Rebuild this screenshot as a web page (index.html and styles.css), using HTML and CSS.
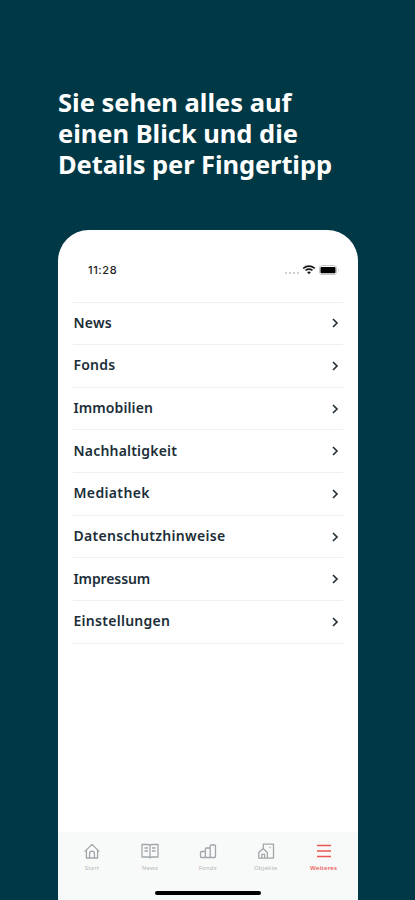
FILE: index.html
```html
<!DOCTYPE html>
<html lang="de">
<head>
<meta charset="utf-8">
<title>Weiteres</title>
<link rel="stylesheet" href="styles.css">
</head>
<body>
<h1 class="headline"><span class="l1">Sie sehen alles auf</span><span class="l2">einen Blick und die</span><span class="l3">Details per Fingertipp</span></h1>
<main class="phone">
  <header class="status">
    <span class="time">11:28</span>
    <svg class="status-icons" width="56" height="14" viewBox="0 0 56 14">
      <g fill="#d0d0d0"><rect x="1" y="9" width="2" height="2"/><rect x="5" y="9" width="2" height="2"/><rect x="9" y="9" width="2" height="2"/><rect x="13" y="9" width="2" height="2"/></g>
      <g fill="none" stroke="#151515" stroke-width="1.7"><path d="M19.2 5.3Q25 .8 30.8 5.3"/><path d="M21.5 7.4Q25 4.9 28.5 7.4"/></g>
      <path d="M23 9Q25 7.8 27 9L25 11.2Z" fill="#151515"/>
      <rect x="35.5" y="2.5" width="17" height="9" rx="2.5" fill="#fff" stroke="#c8c8c8"/>
      <rect x="36.5" y="4" width="15" height="6.3" rx="1" fill="#000"/>
      <path d="M54 5.5q1.5 1.5 0 3z" fill="#aaa"/>
    </svg>
  </header>
  <ul class="menu">
    <li><span class="news">News</span><svg width="8" height="12" viewBox="0 0 8 12"><path d="M2 2l4 4-4 4"/></svg></li>
    <li><span class="fonds">Fonds</span><svg width="8" height="12" viewBox="0 0 8 12"><path d="M2 2l4 4-4 4"/></svg></li>
    <li><span class="immo">Immobilien</span><svg width="8" height="12" viewBox="0 0 8 12"><path d="M2 2l4 4-4 4"/></svg></li>
    <li><span class="nach">Nachhaltigkeit</span><svg width="8" height="12" viewBox="0 0 8 12"><path d="M2 2l4 4-4 4"/></svg></li>
    <li><span class="media">Mediathek</span><svg width="8" height="12" viewBox="0 0 8 12"><path d="M2 2l4 4-4 4"/></svg></li>
    <li><span class="daten">Datenschutzhinweise</span><svg width="8" height="12" viewBox="0 0 8 12"><path d="M2 2l4 4-4 4"/></svg></li>
    <li><span class="impr">Impressum</span><svg width="8" height="12" viewBox="0 0 8 12"><path d="M2 2l4 4-4 4"/></svg></li>
    <li><span class="einst">Einstellungen</span><svg width="8" height="12" viewBox="0 0 8 12"><path d="M2 2l4 4-4 4"/></svg></li>
  </ul>
  <footer class="bottom">
    <nav class="tabs">
      <div class="tab"><svg width="18" height="18" viewBox="0 0 18 18"><path d="M1.7 9.6L9 2.4l7.3 7.2M3.4 8.3V16h11.2V8.3M6.6 16v-4.4a2.4 2.4 0 0 1 4.8 0V16"/></svg><span>Start</span></div>
      <div class="tab"><svg width="18" height="18" viewBox="0 0 18 18"><path d="M1 2.5h6Q9 2.5 9 4q0-1.5 2-1.5h6V15h-6q-2 0-2 1 0-1-2-1H1zM9 4v12M3.5 6H7M3.5 9H7M11 6h3.5M11 9h3.5"/></svg><span>News</span></div>
      <div class="tab"><svg width="18" height="18" viewBox="0 0 18 18"><path d="M6.4 15.5H2.5a1 1 0 0 1-1-1v-4a1 1 0 0 1 1-1h3.9M6.4 15.5V7a1 1 0 0 1 1-1h3.8v9.5zM11.2 15.5V4a1 1 0 0 1 1-1h3.3a1 1 0 0 1 1 1v10.5a1 1 0 0 1-1 1z"/></svg><span>Fonds</span></div>
      <div class="tab"><svg width="18" height="18" viewBox="0 0 18 18"><path d="M6.3 6.4V2.2h10.2v13.9H1.8v-5.5l4.3-4 4.3 4v5.5M4.8 16v-3.6h2.8V16M12.5 5.5h1.2"/></svg><span>Objekte</span></div>
      <div class="tab active"><svg width="18" height="18" viewBox="0 0 18 18"><path d="M2 3.5h14M2 9h14M2 14.5h14"/></svg><span>Weiteres</span></div>
    </nav>
    <div class="home-bar"></div>
  </footer>
</main>
</body>
</html>
```
FILE: styles.css
```css
* { box-sizing: border-box; }
body {
  margin: 0;
  height: 900px;
  padding: 87px 58px 0;
  background: #003845;
  font-family: "Noto Sans", sans-serif;
  overflow: hidden;
  display: flex;
  flex-direction: column;
}
.headline {
  margin: 0 -10px 0 0;
  height: 143px;
  color: #fff;
  font-size: 25.5px;
  font-weight: 700;
  line-height: 31px;
  white-space: nowrap;
}
.headline span { display: block; }
.l2 { letter-spacing: -0.03px; }
.l3 { letter-spacing: -0.1px; }
.phone {
  flex: 1;
  width: 299.5px;
  background: #fff;
  border-radius: 31px 31px 0 0;
  overflow: hidden;
  display: flex;
  flex-direction: column;
}
.status {
  height: 71.5px;
  padding: 33px 18px 0 30px;
  display: flex;
  justify-content: space-between;
}
.time {
  font: 500 11px/14px Inter, sans-serif;
  letter-spacing: 0.6px;
  color: #222;
}
.menu {
  list-style: none;
  margin: 0 15px;
  padding: 0;
  border-top: 1px solid #f0f0f0;
}
.menu li {
  height: 42.65px;
  padding: 0 4px 2px 0.5px;
  border-bottom: 1px solid #f0f0f0;
  display: flex;
  align-items: center;
  justify-content: space-between;
  font-size: 14px;
  font-weight: 600;
  letter-spacing: 0.2px;
  color: #1b2e38;
}
.menu .immo { letter-spacing: 0.1px; }
.menu .daten { letter-spacing: 0.3px; }
.menu .media { letter-spacing: 0.35px; }
.menu .einst { letter-spacing: 0.28px; }
.menu .impr { letter-spacing: -0.1px; }
.menu svg { fill: none; stroke: #25323a; stroke-width: 1.7; margin-top: 2px; }
.bottom {
  margin-top: auto;
  height: 68px;
  background: #f8f9f9;
  padding: 9.5px 5px 0;
}
.tabs { display: flex; }
.tab {
  flex: 1;
  display: flex;
  flex-direction: column;
  align-items: center;
  font-size: 6px;
  line-height: 8px;
  color: #b5b8ba;
}
.tab span { margin-top: 4.5px; letter-spacing: 0.2px; }
.tab svg { fill: none; stroke: #a0a7aa; stroke-width: 1.3; stroke-linejoin: round; }
.active { color: #ed5c5c; font-weight: 600; }
.active svg { stroke: #ee5555; stroke-width: 1.6; }
.home-bar {
  width: 106px;
  height: 3.5px;
  margin: 19px auto 0;
  border-radius: 2px;
  background: #000;
}
```
